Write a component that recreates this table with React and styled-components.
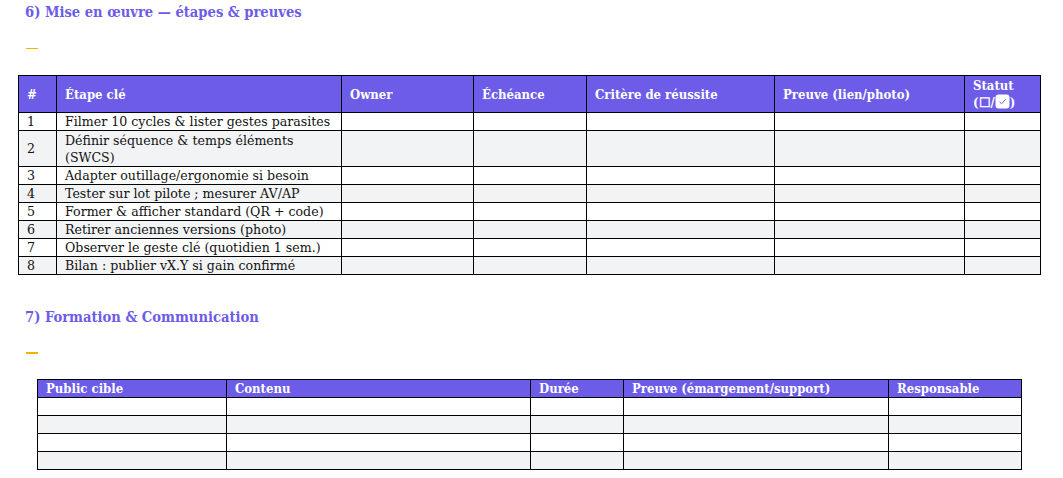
import React from 'react'
import styled, { createGlobalStyle } from 'styled-components'

const Global = createGlobalStyle`
  body {
    margin: 0;
    background: #ffffff;
    font-family: 'DejaVu Serif', serif;
    color: #111;
  }
`

const Page = styled.div`
  padding: 3px 0 0 18px;
  width: 1045px;
`

const Heading = styled.h2`
  margin: ${(p) => p.$top || 0}px 0 0 7px;
  font-family: 'DejaVu Serif Condensed', 'DejaVu Serif', serif;
  font-size: 14.6px;
  line-height: 17px;
  font-weight: 700;
  color: #6c5ce7;
`

const Dash = styled.div`
  width: 12px;
  height: ${(p) => p.$h || 1}px;
  background: #f0b400;
  margin: ${(p) => p.$top}px 0 0 8px;
`

const Table = styled.table`
  border-collapse: collapse;
  table-layout: fixed;
  margin: ${(p) => p.$top}px 0 0 ${(p) => p.$left || 0}px;
  width: ${(p) => p.$width}px;
`

const HeadCell = styled.th`
  background: #6c5ce7;
  color: #ffffff;
  font-family: 'DejaVu Serif Condensed', 'DejaVu Serif', serif;
  font-size: 13px;
  font-weight: 700;
  text-align: left;
  border: 1px solid #000;
  padding: 0 8px;
  height: ${(p) => p.$h}px;
  line-height: 17px;
  vertical-align: middle;
  box-sizing: border-box;
`

const Row = styled.tr`
  background: ${(p) => (p.$alt ? '#f2f3f5' : '#ffffff')};
`

const Cell = styled.td`
  border: 1px solid #000;
  padding: 0 8px;
  font-size: 12.6px;
  line-height: 17px;
  height: ${(p) => (p.$tall ? 36 : 18)}px;
  vertical-align: middle;
  box-sizing: border-box;
`

const Box = styled.span`
  display: inline-block;
  vertical-align: -2px;
  height: 15px;
`

function CheckIcon() {
  return (
    <Box>
      <svg width='15' height='15' viewBox='0 0 15 15' style={{ display: 'block' }}>
        <rect x='0.5' y='0.5' width='14' height='14' rx='3' fill='#ffffff' />
        <path d='M4.5 7.8 L6.6 9.8 L10.6 5.3' fill='none' stroke='#6c5ce7' strokeWidth='1' />
      </svg>
    </Box>
  )
}

const steps = [
  'Filmer 10 cycles & lister gestes parasites',
  'Définir séquence & temps éléments (SWCS)',
  'Adapter outillage/ergonomie si besoin',
  'Tester sur lot pilote ; mesurer AV/AP',
  'Former & afficher standard (QR + code)',
  'Retirer anciennes versions (photo)',
  'Observer le geste clé (quotidien 1 sem.)',
  'Bilan : publier vX.Y si gain confirmé',
]

const cols1 = [38, 285, 132, 113, 188, 190, 76]
const cols2 = [189, 304, 93, 265, 133]

export default function App() {
  return (
    <Page>
      <Global />
      <Heading>6) Mise en œuvre — étapes &amp; preuves</Heading>
      <Dash $top={28} />
      <Table $top={26} $width={1022}>
        <colgroup>
          {cols1.map((w, i) => <col key={i} style={{ width: w }} />)}
        </colgroup>
        <thead>
          <tr>
            <HeadCell $h={37}>#</HeadCell>
            <HeadCell $h={37}>Étape clé</HeadCell>
            <HeadCell $h={37}>Owner</HeadCell>
            <HeadCell $h={37}>Échéance</HeadCell>
            <HeadCell $h={37}>Critère de réussite</HeadCell>
            <HeadCell $h={37}>Preuve (lien/photo)</HeadCell>
            <HeadCell $h={37}>Statut<br />(☐/<CheckIcon />)</HeadCell>
          </tr>
        </thead>
        <tbody>
          {steps.map((s, i) => (
            <Row key={i} $alt={i % 2 === 1}>
              <Cell $tall={i === 1}>{i + 1}</Cell>
              <Cell $tall={i === 1}>{s}</Cell>
              <Cell $tall={i === 1} />
              <Cell $tall={i === 1} />
              <Cell $tall={i === 1} />
              <Cell $tall={i === 1} />
              <Cell $tall={i === 1} />
            </Row>
          ))}
        </tbody>
      </Table>

      <Heading $top={33}>7) Formation &amp; Communication</Heading>
      <Dash $top={27} $h={2} />
      <Table $top={25} $left={19} $width={984}>
        <colgroup>
          {cols2.map((w, i) => <col key={i} style={{ width: w }} />)}
        </colgroup>
        <thead>
          <tr>
            <HeadCell $h={18}>Public cible</HeadCell>
            <HeadCell $h={18}>Contenu</HeadCell>
            <HeadCell $h={18}>Durée</HeadCell>
            <HeadCell $h={18}>Preuve (émargement/support)</HeadCell>
            <HeadCell $h={18}>Responsable</HeadCell>
          </tr>
        </thead>
        <tbody>
          {[0, 1, 2, 3].map((i) => (
            <Row key={i} $alt={i % 2 === 1}>
              <Cell />
              <Cell />
              <Cell />
              <Cell />
              <Cell />
            </Row>
          ))}
        </tbody>
      </Table>
    </Page>
  )
}
